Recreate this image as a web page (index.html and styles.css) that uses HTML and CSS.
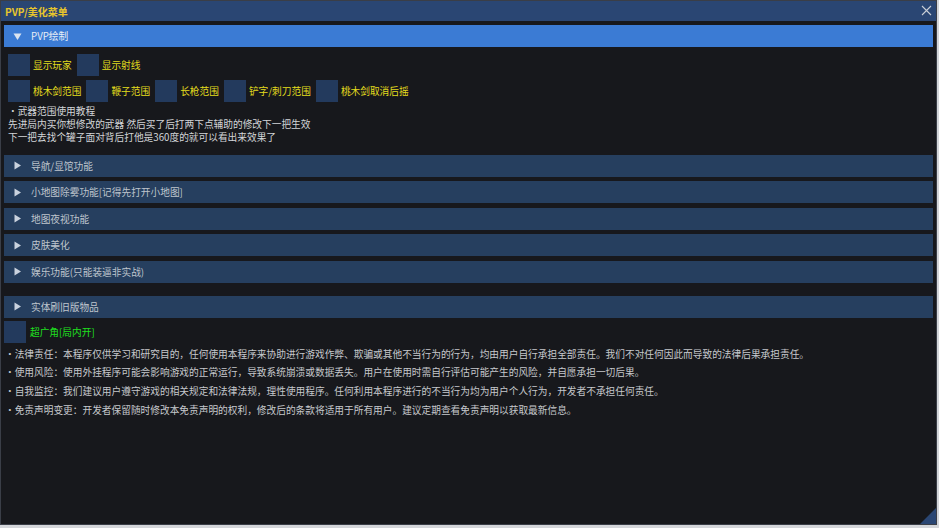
FILE: index.html
```html
<!DOCTYPE html>
<html>
<head>
	<title>PVP/美化菜单</title>
	<link rel="stylesheet" href="styles.css">
</head>
<body>
	<div class="window">
		<div class="titlebar">
			<span class="title">PVP/美化菜单</span>
			<svg class="close" width="11" height="11" viewBox="0 0 11 11"><path d="M1 1 L10 10 M10 1 L1 10" stroke="#c9ced6" stroke-width="1.1"/></svg>
		</div>
		<div class="content">
			<div class="header active">
				<svg class="arrow" width="9" height="9" viewBox="0 0 9 9"><path d="M0.5 1.5 L8.5 1.5 L4.5 8 Z" fill="#dbe4f0"/></svg>
				<span>PVP绘制</span>
			</div>
			<div class="section">
				<div class="row first">
					<div class="check"><span class="box"></span><span class="label">显示玩家</span></div>
					<div class="check"><span class="box"></span><span class="label">显示射线</span></div>
				</div>
				<div class="row">
					<div class="check"><span class="box"></span><span class="label">桃木剑范围</span></div>
					<div class="check"><span class="box"></span><span class="label">鞭子范围</span></div>
					<div class="check"><span class="box"></span><span class="label">长枪范围</span></div>
					<div class="check"><span class="box"></span><span class="label">铲字/刺刀范围</span></div>
					<div class="check"><span class="box"></span><span class="label">桃木剑取消后摇</span></div>
				</div>
				<div class="notes">
					<div>•武器范围使用教程</div>
					<div>先进局内买你想修改的武器 然后买了后打两下点辅助的修改下一把生效</div>
					<div>下一把去找个罐子面对背后打他是360度的就可以看出来效果了</div>
				</div>
			</div>
			<div class="header">
				<svg class="arrow" width="9" height="9" viewBox="0 0 9 9"><path d="M1.5 0.5 L8 4.5 L1.5 8.5 Z" fill="#c9d2de"/></svg>
				<span>导航/显馆功能</span>
			</div>
			<div class="header">
				<svg class="arrow" width="9" height="9" viewBox="0 0 9 9"><path d="M1.5 0.5 L8 4.5 L1.5 8.5 Z" fill="#c9d2de"/></svg>
				<span>小地图除雾功能[记得先打开小地图]</span>
			</div>
			<div class="header">
				<svg class="arrow" width="9" height="9" viewBox="0 0 9 9"><path d="M1.5 0.5 L8 4.5 L1.5 8.5 Z" fill="#c9d2de"/></svg>
				<span>地图夜视功能</span>
			</div>
			<div class="header">
				<svg class="arrow" width="9" height="9" viewBox="0 0 9 9"><path d="M1.5 0.5 L8 4.5 L1.5 8.5 Z" fill="#c9d2de"/></svg>
				<span>皮肤美化</span>
			</div>
			<div class="header">
				<svg class="arrow" width="9" height="9" viewBox="0 0 9 9"><path d="M1.5 0.5 L8 4.5 L1.5 8.5 Z" fill="#c9d2de"/></svg>
				<span>娱乐功能(只能装逼非实战)</span>
			</div>
			<div class="header spaced">
				<svg class="arrow" width="9" height="9" viewBox="0 0 9 9"><path d="M1.5 0.5 L8 4.5 L1.5 8.5 Z" fill="#c9d2de"/></svg>
				<span>实体刷旧版物品</span>
			</div>
			<div class="check wide"><span class="box"></span><span class="label green">超广角[局内开]</span></div>
			<div class="disclaimer">
				<div>•法律责任：本程序仅供学习和研究目的，任何使用本程序来协助进行游戏作弊、欺骗或其他不当行为的行为，均由用户自行承担全部责任。我们不对任何因此而导致的法律后果承担责任。</div>
				<div>•使用风险：使用外挂程序可能会影响游戏的正常运行，导致系统崩溃或数据丢失。用户在使用时需自行评估可能产生的风险，并自愿承担一切后果。</div>
				<div>•自我监控：我们建议用户遵守游戏的相关规定和法律法规，理性使用程序。任何利用本程序进行的不当行为均为用户个人行为，开发者不承担任何责任。</div>
				<div>•免责声明变更：开发者保留随时修改本免责声明的权利，修改后的条款将适用于所有用户。建议定期查看免责声明以获取最新信息。</div>
			</div>
		</div>
		<div class="grip"></div>
	</div>
</body>
</html>
```

FILE: styles.css
```css
body {
	margin: 0;
	background-color: #d4d6da;
	font-family: "Noto Sans CJK SC", "Noto Sans", sans-serif;
	font-size: 9.7px;
}

.window {
	position: relative;
	width: 935px;
	height: 523px;
	border: 1px solid #3a3e47;
	background-color: #17181c;
	display: flex;
	flex-direction: column;
	overflow: hidden;
}

.titlebar {
	height: 20px;
	flex: none;
	background-color: #2a4673;
	display: flex;
	align-items: center;
	justify-content: space-between;
	padding: 0 4px 0 4px;
}

.title {
	color: #e7c52c;
	font-weight: bold;
	font-size: 10px;
}

.close {
	margin-top: -2px;
}

.content {
	padding: 4px 3px 0 3px;
	display: flex;
	flex-direction: column;
}

.header {
	height: 22px;
	flex: none;
	background-color: #263f5f;
	display: flex;
	align-items: center;
	color: #bfc5cd;
	margin-top: 4.5px;
}

.header.active {
	background-color: #3b7bd4;
	color: #e8eef6;
	margin-top: 0;
}

.header.spaced {
	margin-top: 13px;
}

.arrow {
	margin: 0 9px 0 9px;
}

.section {
	padding: 7px 0 6px 4px;
}

.row {
	display: flex;
	gap: 5px;
	margin-top: 4px;
}

.row.first {
	margin-top: 0;
}

.check {
	display: flex;
	align-items: center;
	gap: 3px;
}

.check.wide {
	margin-top: 3px;
	gap: 4px;
}

.box {
	width: 22px;
	height: 22px;
	background-color: #233a5d;
}

.label {
	color: #e3dc1c;
}

.label.green {
	color: #1fe01f;
}

.notes {
	margin-top: 3px;
	color: #d3d5d8;
	line-height: 13px;
}

.disclaimer {
	margin-top: 2px;
	color: #c6c8cc;
	line-height: 18.7px;
	padding-left: 1px;
}

.grip {
	position: absolute;
	right: 0;
	bottom: 0;
	width: 0;
	height: 0;
	border-left: 16px solid transparent;
	border-bottom: 16px solid #2a4673;
}
```
